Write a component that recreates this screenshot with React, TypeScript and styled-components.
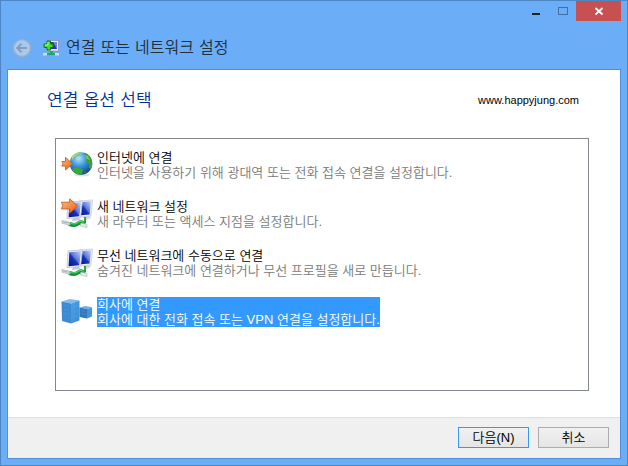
import React, { useState } from 'react';
import styled, { createGlobalStyle } from 'styled-components';

const GlobalStyle = createGlobalStyle`
  * {
    box-sizing: border-box;
  }

  body {
    margin: 0;
    font-family: 'Liberation Sans', 'Noto Sans CJK KR', sans-serif;
    font-size: 13px;
    color: #000;
  }

  button {
    margin: 0;
    padding: 0;
    border: 0;
    background: none;
    color: inherit;
    font: inherit;
  }

  svg {
    display: block;
    flex: none;
  }
`;

const Window = styled.main`
  display: flex;
  flex-direction: column;
  min-height: 100vh;
  padding: 0 6px 6px;
  border: 1px solid #4c86c3;
  background: #6badf6;
`;

const CaptionBar = styled.div`
  display: flex;
  justify-content: flex-end;
`;

const CaptionButton = styled.button<{ $close?: boolean }>`
  display: flex;
  align-items: center;
  justify-content: center;
  width: ${({ $close }) => ($close ? '45px' : '27px')};
  height: 20px;
  background: ${({ $close }) => ($close ? '#c75050' : 'transparent')};
`;

const TitleBar = styled.header`
  display: flex;
  align-items: center;
  height: 48px;
  padding: 6px 5px 0;
`;

const BackButton = styled.button`
  margin-right: 11px;
`;

const WindowTitle = styled.h1`
  margin: 0 0 0 7px;
  font-family: 'DejaVu Sans', 'Noto Sans CJK KR', sans-serif;
  font-size: 16px;
  font-weight: 350;
  line-height: 22px;
  color: #222d3a;
`;

const Client = styled.section`
  display: flex;
  flex: 1;
  flex-direction: column;
  border: 1px solid #5090d8;
  background: #fff;
`;

const Body = styled.div`
  display: flex;
  flex: 1;
  flex-direction: column;
  padding: 18px 31px 26px 47px;
`;

const HeadingRow = styled.div`
  display: flex;
  align-items: center;
  justify-content: space-between;
  height: 24px;
  margin: 0 10px 26px -8px;
`;

const Heading = styled.h2`
  margin: 0;
  font-family: 'DejaVu Sans', 'Noto Sans CJK KR', sans-serif;
  font-size: 17px;
  font-weight: 350;
  line-height: 24px;
  color: #003399;
`;

const SiteLink = styled.a`
  font-size: 11px;
  color: #000;
  text-decoration: none;
`;

const OptionList = styled.div`
  display: flex;
  flex: 1;
  flex-direction: column;
  gap: 17px;
  padding: 10px 5px;
  border: 1px solid #828790;
`;

const Option = styled.button`
  display: flex;
  align-items: center;
  gap: 4px;
  height: 32px;
  font-weight: 350;
  text-align: left;

  &:focus {
    outline: none;
  }
`;

const OptionText = styled.span<{ $selected: boolean }>`
  display: flex;
  flex-direction: column;
  background: ${({ $selected }) => ($selected ? '#3399ff' : 'transparent')};
  color: ${({ $selected }) => ($selected ? '#fff' : '#000')};
`;

const OptionName = styled.span`
  line-height: 15px;
`;

const OptionDetail = styled.span<{ $selected: boolean }>`
  line-height: 15px;
  color: ${({ $selected }) => ($selected ? '#fff' : '#787878')};
`;

const Footer = styled.footer`
  display: flex;
  justify-content: flex-end;
  gap: 9px;
  padding: 9px 11px 10px;
  border-top: 1px solid #dfdfdf;
  background: #f0f0f0;
`;

const PushButton = styled.button<{ $primary?: boolean }>`
  width: 71px;
  height: 21px;
  border: 1px solid ${({ $primary }) => ($primary ? '#3399ff' : '#acacac')};
  background: linear-gradient(#f1f1f1, #e5e5e5);
  font-family: 'Liberation Sans', 'Noto Sans CJK KR', sans-serif;
  font-weight: 350;
  line-height: 19px;
`;

const MinimizeIcon = () => (
  <svg width="10" height="10" viewBox="0 0 10 10" aria-hidden="true">
    <rect x="1" y="7" width="8" height="2" fill="#1c2229" />
  </svg>
);

const MaximizeIcon = () => (
  <svg width="10" height="10" viewBox="0 0 10 10" aria-hidden="true">
    <rect x="0.5" y="1.5" width="9" height="7" fill="none" stroke="#456f9f" />
  </svg>
);

const CloseIcon = () => (
  <svg width="10" height="10" viewBox="0 0 10 10" aria-hidden="true">
    <path d="M1.5 2l7 6.500M8.500 2l-7 6.500" stroke="#fff" strokeWidth="1.800" />
  </svg>
);

const BackIcon = () => (
  <svg width="20" height="20" viewBox="0 0 20 20" aria-hidden="true">
    <circle cx="10" cy="10" r="8.600" fill="#a5cbf4" stroke="#9aaec6" strokeWidth="1.500" />
    <path d="M5.500 10H15M9.500 5.800L5.300 10l4.200 4.200" fill="none" stroke="#8b9db4" strokeWidth="2" />
  </svg>
);

const ConnectionIcon = () => (
  <svg width="16" height="16" viewBox="0 0 16 16" aria-hidden="true">
    <path d="M5 .5h10.500v10.500H5z" fill="#e8eef8" stroke="#8590ad" strokeWidth=".8" />
    <path d="M6.500 2h7.500v7h-7.500z" fill="#2734b0" />
    <path d="M10 2h4v7z" fill="#7680dc" />
    <path d="M0 13h16v2.500H0z" fill="#d5dce5" />
    <path d="M7 11h3v2h2v2.500H4V13h3z" fill="#20a96d" />
    <path d="M4 1h3.500v3H10v3.500H7.500V10H4V7.500H1V4h3z" fill="#48dc2c" stroke="#16761b" />
    <path d="M5 2v3H2" fill="none" stroke="#b6ff8d" />
  </svg>
);

const ArrowGradient = () => (
  <linearGradient id="arrowFill" x1="0" y1="0" x2="1" y2="1">
    <stop stopColor="#ffc08a" />
    <stop offset=".55" stopColor="#f48742" />
    <stop offset="1" stopColor="#dc5e20" />
  </linearGradient>
);

const GlobeIcon = () => (
  <svg width="32" height="32" viewBox="0 0 32 32" aria-hidden="true">
    <defs>
      <ArrowGradient />
      <radialGradient id="ocean" cx=".4" cy=".28" r=".75">
        <stop stopColor="#b7e4fb" />
        <stop offset=".45" stopColor="#3a98dc" />
        <stop offset="1" stopColor="#113b8b" />
      </radialGradient>
      <clipPath id="globeEdge">
        <circle cx="20" cy="14.500" r="11.300" />
      </clipPath>
    </defs>
    <ellipse cx="21" cy="26" rx="8" ry="1.500" fill="#c9ccd0" opacity=".6" />
    <circle cx="20" cy="14.500" r="11.300" fill="url(#ocean)" />
    <g clipPath="url(#globeEdge)">
      <path d="M9 10l2-4 5-3 4 0-2 3-3 1-2 3-3 1z" fill="#5dbb3f" />
      <path d="M23 4l3-1 4 5 2 7-2 5-2-1 0-4-3-3 1-3 1-2-3-1z" fill="#3f9f31" />
      <path d="M24 6l3 1 2 4-3-1z" fill="#79c957" />
      <path d="M11 20l5-2 6 3-1 4-3 2-5-2z" fill="#39a832" />
      <path d="M23 23l3-1-1 2-3 1z" fill="#287f38" />
      <path d="M11 7q5-5 11-3-6 0-11 7z" fill="#e5f9ef" opacity=".5" />
    </g>
    <path
      d="M.8 12.500h3.700V8.300l7 6.500-7 6.200v-3.900H.8l1.300-2.300z"
      fill="url(#arrowFill)"
      stroke="#c85e28"
      strokeWidth=".9"
      strokeLinejoin="round"
    />
  </svg>
);

const MonitorsIcon = ({ arrow = false }: { arrow?: boolean }) => {
  const screenId = arrow ? 'screenWired' : 'screenWireless';
  return (
    <svg width="32" height="32" viewBox="0 0 32 32" aria-hidden="true">
      <defs>
        <ArrowGradient />
        <linearGradient id={screenId} x1="0" y1="1" x2="1" y2="0">
          <stop stopColor="#061583" />
          <stop offset=".45" stopColor="#1733b9" />
          <stop offset=".53" stopColor="#5b75d8" />
          <stop offset="1" stopColor="#c8d5fb" />
        </linearGradient>
      </defs>
      <path d="M22 19l7-1 1 2-5 2z" fill="#d3d7de" />
      <path d="M18 3l13.500-1-1.500 16-11 1z" fill="#edf0f5" stroke="#c5ccda" strokeWidth=".8" />
      <path d="M19 4.300l11-1-1.300 13.200-9 .8z" fill={`url(#${screenId})`} />
      <path d="M12 20l5-1 3 3-9 1z" fill="#c4cad3" />
      <path d="M7 4l14.500-1-2 16.500-13.500 1z" fill="#eef1f7" stroke="#b7c1d5" strokeWidth=".8" />
      <path d="M8.300 5.300l11.700-1-1.700 14-10.700 1z" fill={`url(#${screenId})`} />
      <path d="M24 19v6" stroke="#2ea63d" strokeWidth="2" />
      <path d="M8 26q6 2 9-.5t7 .5" fill="none" stroke="#159139" strokeWidth="4" />
      <path d="M9 25q5 2 8-.500t6 .2" fill="none" stroke="#54cf61" strokeWidth="1.200" />
      <path d="M.8 22.500l7.500 1.500 1 3-8-1.500z" fill="#dce3e4" stroke="#9eaaae" strokeWidth=".6" />
      <path d="M1.500 24l6 1.200" stroke="#8da59b" strokeWidth=".7" />
      <path d="M20 25l6 1.500v3L19.500 28z" fill="#e5e9ea" stroke="#aab5b8" strokeWidth=".6" />
      {arrow && (
        <path
          d="M.5 4.200h8.200V.8l8 7.200-8 7v-4H.5l1.300-3.400z"
          fill="url(#arrowFill)"
          stroke="#c85e28"
          strokeWidth=".9"
          strokeLinejoin="round"
        />
      )}
    </svg>
  );
};

const WorkplaceIcon = () => (
  <svg width="32" height="32" viewBox="0 0 32 32" aria-hidden="true">
    <defs>
      <linearGradient id="towerFront" x1="0" y1="0" x2="1" y2="1">
        <stop stopColor="#4ea1e6" />
        <stop offset="1" stopColor="#3a8ad2" />
      </linearGradient>
    </defs>
    <path d="M.5 5.500L9 3l9.500 1.500L10 7.500z" fill="#7dbcf0" />
    <path d="M.5 5.500L10 7.500v20l-9-2.500z" fill="#3c8bd2" />
    <path d="M10 7.500l8.500-3v20L10 27.500z" fill="url(#towerFront)" />
    <path d="M2.500 9l5.500 1.200M2.500 13l5.500 1.200M2.500 17l5.500 1.200M12 11l5-1.500M12 16l5-1.500M12 21l5-1.500" stroke="#5caaea" strokeWidth=".8" opacity=".4" />
    <path d="M18.500 11.500l6-1.500 6.500 1.200-5 1.800z" fill="#6bb0e8" />
    <path d="M18.500 11.500L26 13v9.500l-7.500-1.500z" fill="#3179bd" />
    <path d="M26 13l5-1.800v9.300l-5 2z" fill="#4795d8" />
    <path d="M20 14.500l4.500 .8M20 17.500l4.500 .8" stroke="#5ba5df" strokeWidth=".8" opacity=".5" />
  </svg>
);

const options = [
  {
    name: '인터넷에 연결',
    detail: '인터넷을 사용하기 위해 광대역 또는 전화 접속 연결을 설정합니다.',
    icon: <GlobeIcon />,
  },
  {
    name: '새 네트워크 설정',
    detail: '새 라우터 또는 액세스 지점을 설정합니다.',
    icon: <MonitorsIcon arrow />,
  },
  {
    name: '무선 네트워크에 수동으로 연결',
    detail: '숨겨진 네트워크에 연결하거나 무선 프로필을 새로 만듭니다.',
    icon: <MonitorsIcon />,
  },
  {
    name: '회사에 연결',
    detail: '회사에 대한 전화 접속 또는 VPN 연결을 설정합니다.',
    icon: <WorkplaceIcon />,
  },
];

export default function App() {
  const [selected, setSelected] = useState(3);

  return (
    <>
      <GlobalStyle />
      <Window>
        <CaptionBar>
          <CaptionButton aria-label="최소화"><MinimizeIcon /></CaptionButton>
          <CaptionButton aria-label="최대화"><MaximizeIcon /></CaptionButton>
          <CaptionButton $close aria-label="닫기"><CloseIcon /></CaptionButton>
        </CaptionBar>
        <TitleBar>
          <BackButton aria-label="뒤로"><BackIcon /></BackButton>
          <ConnectionIcon />
          <WindowTitle>연결 또는 네트워크 설정</WindowTitle>
        </TitleBar>
        <Client>
          <Body>
            <HeadingRow>
              <Heading>연결 옵션 선택</Heading>
              <SiteLink href="http://www.happyjung.com">www.happyjung.com</SiteLink>
            </HeadingRow>
            <OptionList role="listbox" aria-label="연결 옵션 선택">
              {options.map((option, index) => (
                <Option
                  key={option.name}
                  role="option"
                  aria-selected={index === selected}
                  onClick={() => setSelected(index)}
                >
                  {option.icon}
                  <OptionText $selected={index === selected}>
                    <OptionName>{option.name}</OptionName>
                    <OptionDetail $selected={index === selected}>{option.detail}</OptionDetail>
                  </OptionText>
                </Option>
              ))}
            </OptionList>
          </Body>
          <Footer>
            <PushButton $primary>다음(N)</PushButton>
            <PushButton>취소</PushButton>
          </Footer>
        </Client>
      </Window>
    </>
  );
}
